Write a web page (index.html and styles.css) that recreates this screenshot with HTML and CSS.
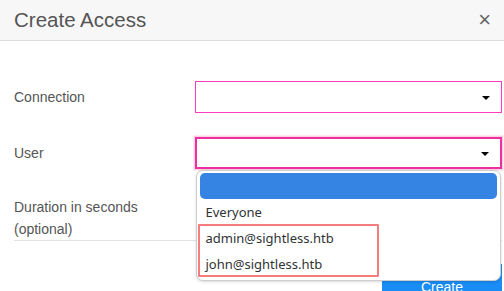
FILE: index.html
```html
<html>
	<head>
		<meta charset="utf-8">
		<link rel="stylesheet" href="styles.css">
	</head>
	<body>
		<div class="modal">
			<div class="modal-header">
				<h4 class="modal-title">Create Access</h4>
				<span class="close">&times;</span>
			</div>

			<div class="modal-body">
				<div class="form-row">
					<label class="form-label">Connection</label>
					<div class="form-control">
						<div class="select"><span class="caret"></span></div>
					</div>
				</div>

				<div class="form-row">
					<label class="form-label">User</label>
					<div class="form-control">
						<div class="select focused"><span class="caret"></span></div>

						<!-- native popup of the open select -->
						<ul class="dropdown">
							<li class="item selected"></li>
							<li class="item">Everyone</li>
							<li class="item">admin@sightless.htb</li>
							<li class="item">john@sightless.htb</li>
						</ul>
						<div class="highlight-box"></div>
					</div>
				</div>

				<div class="form-row duration">
					<label class="form-label">Duration in seconds<br>(optional)</label>
				</div>
			</div>

			<div class="modal-footer">
				<button class="btn-create">Create</button>
			</div>
		</div>
	</body>
</html>
```

FILE: styles.css
```css
body {
	margin: 0;
	background: #fff;
	font-family: "Liberation Sans", Arial, sans-serif;
	color: #555;
}

div.modal {
	width: 504px;
	height: 291px;
	overflow: hidden;
}

div.modal-header {
	display: flex;
	align-items: center;
	justify-content: space-between;
	height: 40px;
	padding: 0 14px;
	background: #f7f7f7;
	border-bottom: 1px solid #dcdcdc;
}

h4.modal-title {
	margin: 0;
	font-size: 20.5px;
	font-weight: normal;
	color: #555;
}

span.close {
	font-size: 22px;
	line-height: 22px;
	color: #666;
	margin-right: -1px;
}

div.modal-body {
	display: flex;
	flex-direction: column;
	padding: 40px 2px 0 14px;
}

div.form-row {
	display: flex;
	align-items: center;
	margin-bottom: 24px;
}

div.form-row.duration {
	margin-top: 3px;
	margin-bottom: 0;
	border-bottom: 1px solid #e3e3e3;
}

label.form-label {
	width: 181px;
	flex: none;
	font-size: 14px;
	line-height: 22px;
}

div.form-control {
	position: relative;
	flex: 1;
}

div.select {
	position: relative;
	box-sizing: border-box;
	height: 32px;
	border: 1px solid #ff3cbe;
	background: #fff;
}

div.select.focused {
	border: 2px solid #ee2fa2;
	box-shadow: 0 0 0 1.5px #fbd3e2;
}

span.caret {
	position: absolute;
	right: 11px;
	top: 50%;
	margin-top: -1px;
	border-left: 4px solid transparent;
	border-right: 4px solid transparent;
	border-top: 4px solid #000;
}

/* popup list */
ul.dropdown {
	position: absolute;
	left: 0.5px;
	top: 33px;
	width: 305px;
	box-sizing: border-box;
	margin: 0;
	padding: 2px 3px 2px 3px;
	list-style: none;
	background: #fff;
	border: 1px solid #cdcdcd;
	border-radius: 7px;
	box-shadow: 0 1px 3px rgba(0, 0, 0, 0.15);
	font-family: "Noto Sans", sans-serif;
	font-size: 13px;
	color: #2e3436;
	z-index: 2;
}

li.item {
	height: 26px;
	line-height: 25px;
	padding-left: 6px;
}

li.item.selected {
	height: 26px;
	margin-bottom: 1px;
	background: #3584e4;
	border-radius: 5px;
}

div.highlight-box {
	position: absolute;
	left: 3px;
	top: 87px;
	width: 181px;
	height: 53px;
	box-sizing: border-box;
	border: 2px solid #f57d7d;
	border-radius: 1px;
	z-index: 3;
}

div.modal-footer {
	display: flex;
	justify-content: flex-end;
	padding: 23px 2px 0 14px;
}

button.btn-create {
	width: 120px;
	height: 40px;
	padding: 5px 0 0 0;
	border: none;
	background: #198cf5;
	color: #fff;
	font-family: "Liberation Sans", Arial, sans-serif;
	font-size: 14px;
	line-height: 16px;
	align-self: flex-start;
	display: block;
	text-align: center;
	vertical-align: top;
}
```
